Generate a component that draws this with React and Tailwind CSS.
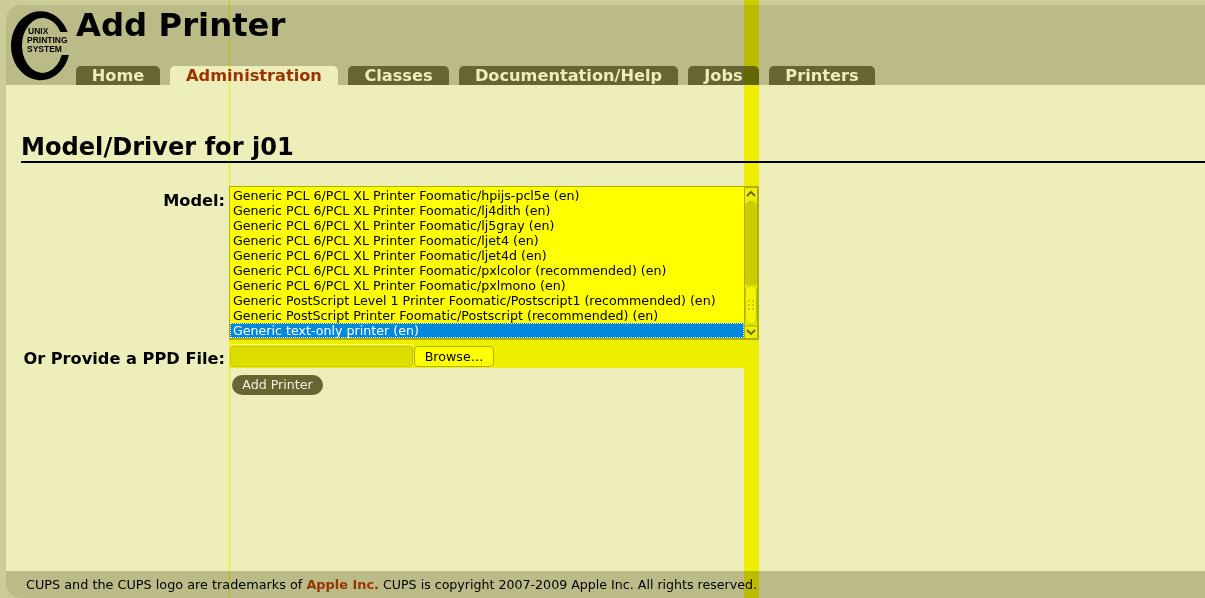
const rows = [
  "Generic PCL 6/PCL XL Printer Foomatic/hpijs-pcl5e (en)",
  "Generic PCL 6/PCL XL Printer Foomatic/lj4dith (en)",
  "Generic PCL 6/PCL XL Printer Foomatic/lj5gray (en)",
  "Generic PCL 6/PCL XL Printer Foomatic/ljet4 (en)",
  "Generic PCL 6/PCL XL Printer Foomatic/ljet4d (en)",
  "Generic PCL 6/PCL XL Printer Foomatic/pxlcolor (recommended) (en)",
  "Generic PCL 6/PCL XL Printer Foomatic/pxlmono (en)",
  "Generic PostScript Level 1 Printer Foomatic/Postscript1 (recommended) (en)",
  "Generic PostScript Printer Foomatic/Postscript (recommended) (en)",
];

const tabs = [
  ["Home", false, "w-[84px]"],
  ["Administration", true, "w-[168px]"],
  ["Classes", false, "w-[101px]"],
  ["Documentation/Help", false, "w-[219px]"],
  ["Jobs", false, "w-[71px]"],
  ["Printers", false, "w-[106px]"],
];

function Logo() {
  const f = "Liberation Sans, sans-serif";
  return (
    <svg width="62" height="72" viewBox="11 10 62 72" className="shrink-0">
      <path d="M67.6 32 A29.5 34.5 0 1 0 68.9 55 L61.7 55 A20.5 27.5 0 1 1 60.4 32 Z" fill="#000" />
      <text x="28" y="34" fontSize="8.5" fontWeight="700" fontFamily={f}>UNIX</text>
      <text x="27" y="43" fontSize="8.5" fontWeight="700" fontFamily={f}>PRINTING</text>
      <text x="27" y="51.5" fontSize="8.5" fontWeight="700" fontFamily={f}>SYSTEM</text>
    </svg>
  );
}

function Scrollbar() {
  return (
    <div className="w-[13px] h-full flex flex-col bg-[#eeee00] border-l border-t border-[#b0b000]">
      <svg width="12" height="12" viewBox="0 0 12 12" className="shrink-0">
        <path d="M2 8 L6 4 L10 8" fill="none" stroke="#666600" strokeWidth="1.8" />
      </svg>
      <div className="h-[85px] bg-[#cccc00] rounded-t-[6px] border-t border-[#e8e800]" />
      <div className="h-[40px] bg-[#f4f400] rounded-[6px] border border-[#c4c400] flex flex-col items-center justify-center gap-[2px]">
        <div className="flex gap-[2px]"><div className="size-[2px] bg-[#cccc00]" /><div className="size-[2px] bg-[#cccc00]" /></div>
        <div className="flex gap-[2px]"><div className="size-[2px] bg-[#cccc00]" /><div className="size-[2px] bg-[#cccc00]" /></div>
        <div className="flex gap-[2px]"><div className="size-[2px] bg-[#cccc00]" /><div className="size-[2px] bg-[#cccc00]" /></div>
      </div>
      <div className="h-[2px] bg-[#cccc00]" />
      <svg width="12" height="11" viewBox="0 0 12 11" className="shrink-0 mt-auto">
        <path d="M2 3 L6 7 L10 3" fill="none" stroke="#666600" strokeWidth="1.8" />
      </svg>
    </div>
  );
}

export default function App() {
  return (
    <div className="relative w-[1205px] h-[598px] overflow-hidden bg-[#cccc99] pt-[5px] pl-[6px] flex flex-col text-black font-['DejaVu_Sans',sans-serif]">
      <header className="h-[80px] shrink-0 bg-[#bbbb88] rounded-tl-[15px] flex pl-[5px] pt-[5px]">
        <Logo />
        <div className="flex flex-col ml-[3px] flex-1">
          <h1 className="text-[32.3px] leading-[31px] font-bold h-[51px] mb-[5px]">Add Printer</h1>
          <nav className="flex gap-[10px]">
            {tabs.map(([t, on, w]) => (
              <div
                key={t}
                className={
                  w + " h-[19px] text-center rounded-t-[5px] text-[16.2px] leading-[19px] font-bold " +
                  (on ? "bg-[#eeeebb] text-[#993300]" : "bg-[#666633] text-[#eeeebb]")
                }
              >
                {t}
              </div>
            ))}
          </nav>
        </div>
      </header>

      <main className="flex-1 bg-[#eeeebb] pl-[15px] pt-[45px]">
        <h2 className="h-[33px] border-b-2 border-black text-[24.1px] leading-[34px] font-bold">Model/Driver for j01</h2>
        <div className="grid grid-cols-[204px_1fr] gap-x-[4px] mt-[23px]">
          <div className="text-right text-[16.2px] font-bold leading-[19px] pt-[5px]">Model:</div>
          <div className="w-[530px] h-[154px] border-[#b0b000] border-l border-t border-r-2 border-b-2 flex bg-[#ffff00]">
            <div className="flex-1 min-w-0 overflow-hidden pt-[1px]">
              {rows.map((r) => (
                <div key={r} className="h-[15px] pl-[3px] text-[12.65px] leading-[15px] whitespace-nowrap">{r}</div>
              ))}
              <div className="h-[15px] pl-[2px] text-[12.65px] leading-[13px] whitespace-nowrap bg-[#0088dd] text-white border border-dotted border-white">
                Generic text-only printer (en)
              </div>
            </div>
            <Scrollbar />
          </div>
          <div className="text-right text-[16.2px] font-bold leading-[19px] pt-[9px]">Or Provide a PPD File:</div>
          <div className="w-[515px] h-[28px] bg-[#eeee00] flex items-start pt-[4px]">
            <div className="w-[184px] shrink-0 flex flex-col pl-[1px]">
              <div className="h-[1px] bg-[#f6f680]" />
              <div className="mt-[1px] h-[21px] bg-[#dddd00] rounded-[4px] border border-[#c8c800]" />
            </div>
            <div className="ml-[1px] mt-[2px] w-[80px] h-[21px] bg-[#ffff00] rounded-[4px] border border-[#b0b000] text-[12.65px] leading-[19px] text-center">Browse…</div>
          </div>
          <div />
          <div className="mt-[7px] ml-[3px] w-[91px] h-[20px] rounded-full bg-[#666633] text-[#eeeedd] text-[12.65px] leading-[19px] text-center">Add Printer</div>
        </div>
      </main>

      <footer className="h-[27px] shrink-0 bg-[#bbbb88] rounded-bl-[15px] pl-[20px] text-[12.62px] leading-[28px] whitespace-nowrap">
        <span className="text-[12.82px]">CUPS and the CUPS logo are trademarks of </span><a className="text-[12.9px] font-bold text-[#993300]">Apple Inc.</a> CUPS is copyright 2007-2009 Apple Inc. All rights reserved.
      </footer>

      <div className="absolute top-0 bottom-0 left-[744px] w-[15px] bg-[#ffff00] mix-blend-multiply" />
      <div className="absolute top-0 bottom-0 left-[229px] w-[1px] bg-[#ffff00] mix-blend-multiply" />
    </div>
  );
}
